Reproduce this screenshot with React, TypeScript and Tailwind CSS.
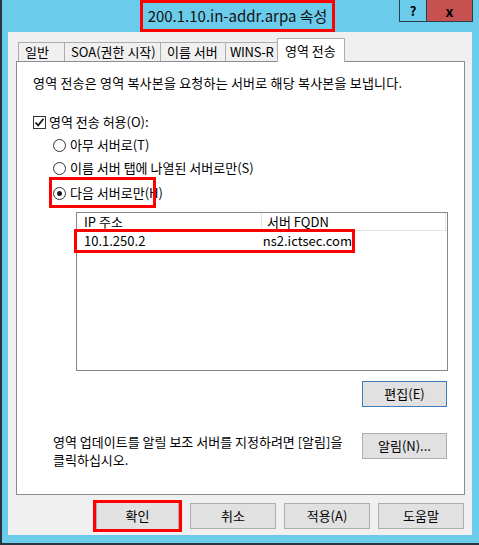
import React from "react";

function Radio({ checked }: { checked?: boolean }) {
  return (
    <span className="w-[13px] h-[13px] rounded-full border border-[#333333] bg-white flex items-center justify-center shrink-0">
      {checked && <span className="w-[5px] h-[5px] rounded-full bg-[#1a1a1a]" />}
    </span>
  );
}

function Btn({ children, focused, className = "" }: { children: React.ReactNode; focused?: boolean; className?: string }) {
  return (
    <div
      className={
        "h-[26px] flex items-center justify-center bg-[#e1e1e1] border " +
        (focused ? "border-[#3d7bbd] " : "border-[#adadad] ") +
        className
      }
    >
      {children}
    </div>
  );
}

export default function App() {
  return (
    <div className="w-[479px] h-[545px] bg-[#6bcbea] border-l-[2px] border-b-[2px] border-[#2a3540] flex flex-col font-['Noto_Sans_CJK_KR','Noto_Sans',sans-serif] text-black leading-[16px] overflow-hidden">
      {/* title bar */}
      <div className="h-[32px] flex shrink-0">
        <div className="flex-1" />
        <div className="border-[3px] border-[#ff0000] px-[5px] flex items-center text-[15px] text-[#111]">
          200.1.10.in-addr.arpa 속성
        </div>
        <div className="flex-1 flex justify-end items-start pr-[6px]">
          <div className="flex h-[22px] border border-t-0 border-[#2c3e4c]">
            <div className="w-[27px] flex items-center justify-center border-r border-[#2c3e4c] text-[13px] font-bold">?</div>
            <div className="w-[45px] bg-[#c75050] flex items-center justify-center text-[14px] font-bold">x</div>
          </div>
        </div>
      </div>

      {/* client */}
      <div className="ml-[6px] mr-[7px] h-[503px] bg-[#f0f0f0] flex flex-col text-[13px]">
        {/* tabs */}
        <div className="mt-[7px] h-[22px] pl-[10px] flex items-end relative z-10 whitespace-nowrap">
          <div className="w-[47px] h-[19px] border border-b-0 border-[#acacac] bg-[#f0f0f0] pl-[6px] flex items-center">일반</div>
          <div className="w-[97px] h-[19px] -ml-px border border-b-0 border-[#acacac] bg-[#f0f0f0] pl-[6px] flex items-center overflow-hidden">SOA(권한 시작)</div>
          <div className="w-[66px] h-[19px] -ml-px border border-b-0 border-[#acacac] bg-[#f0f0f0] pl-[6px] flex items-center overflow-hidden">이름 서버</div>
          <div className="w-[53px] h-[19px] -ml-px border border-b-0 border-[#acacac] bg-[#f0f0f0] pl-[4px] flex items-center overflow-hidden tracking-[-0.3px]">WINS-R</div>
          <div className="w-[68px] h-[24px] -ml-px -mb-px border border-b-0 border-[#acacac] bg-white pl-[7px] flex items-center overflow-hidden">영역 전송</div>
        </div>

        {/* panel */}
        <div className="ml-[8px] w-[449px] h-[434px] border border-[#898c95] bg-white flex flex-col pl-[16px]">
          <div className="mt-[13px] h-[16px] whitespace-nowrap tracking-[0.2px]">영역 전송은 영역 복사본을 요청하는 서버로 해당 복사본을 보냅니다.</div>

          <div className="mt-[23px] h-[16px] flex items-center">
            <span className="w-[13px] h-[13px] border border-[#333] bg-white flex items-center justify-center shrink-0">
              <svg width="11" height="11" viewBox="0 0 11 11">
                <path d="M1.5 5.5 L4.2 8.3 L9.5 1.8" stroke="#1a1a1a" strokeWidth="1.8" fill="none" />
              </svg>
            </span>
            <span className="ml-[3px]">영역 전송 허용(O):</span>
          </div>

          <div className="mt-[7px] h-[16px] ml-[20px] flex items-center">
            <Radio />
            <span className="ml-[4px]">아무 서버로(T)</span>
          </div>
          <div className="mt-[7px] h-[16px] ml-[20px] flex items-center">
            <Radio />
            <span className="ml-[4px]">이름 서버 탭에 나열된 서버로만(S)</span>
          </div>
          <div className="mt-[9px] h-[16px] ml-[20px] flex items-center relative">
            <Radio checked />
            <span className="ml-[4px] whitespace-nowrap">다음 서버로만(H)</span>
            <span className="absolute left-[-4px] top-[-8px] w-[107px] h-[31px] border-[3px] border-[#ff0000]" />
          </div>

          {/* list */}
          <div className="mt-[11px] ml-[43px] w-[372px] h-[159px] border border-[#828790] bg-white flex flex-col">
            <div className="h-[18px] flex border-b border-[#e5e5e5] shrink-0">
              <div className="w-[185px] border-r border-[#e5e5e5] pl-[7px] flex items-center">IP 주소</div>
              <div className="w-[184px] border-r border-[#e5e5e5] pl-[5px] flex items-center">서버 FQDN</div>
            </div>
            <div className="-mt-[2px] -ml-[3px] w-[281px] h-[24px] border-[3px] border-[#ff0000] flex items-center">
              <span className="w-[189px] pl-[7px]">10.1.250.2</span>
              <span>ns2.ictsec.com</span>
            </div>
          </div>

          <div className="mt-[10px] flex justify-end pr-[17px]">
            <Btn focused className="w-[85px]">편집(E)</Btn>
          </div>

          <div className="mt-[26px] flex justify-between pr-[17px]">
            <div className="ml-[20px] leading-[18px] whitespace-nowrap">
              <div>영역 업데이트를 알릴 보조 서버를 지정하려면 [알림]을</div>
              <div>클릭하십시오.</div>
            </div>
            <Btn className="w-[85px]">알림(N)...</Btn>
          </div>
        </div>

        {/* bottom buttons */}
        <div className="mt-[5px] h-[32px] flex items-center justify-end gap-[8px] pr-[8px]">
          <div className="w-[89px] h-[32px] border-[3px] border-[#ff0000] flex items-center justify-center">
            <Btn className="w-[85px] border-t-0 border-b-0">확인</Btn>
          </div>
          <Btn className="w-[86px]">취소</Btn>
          <Btn className="w-[86px]">적용(A)</Btn>
          <Btn className="w-[86px]">도움말</Btn>
        </div>
      </div>
    </div>
  );
}
